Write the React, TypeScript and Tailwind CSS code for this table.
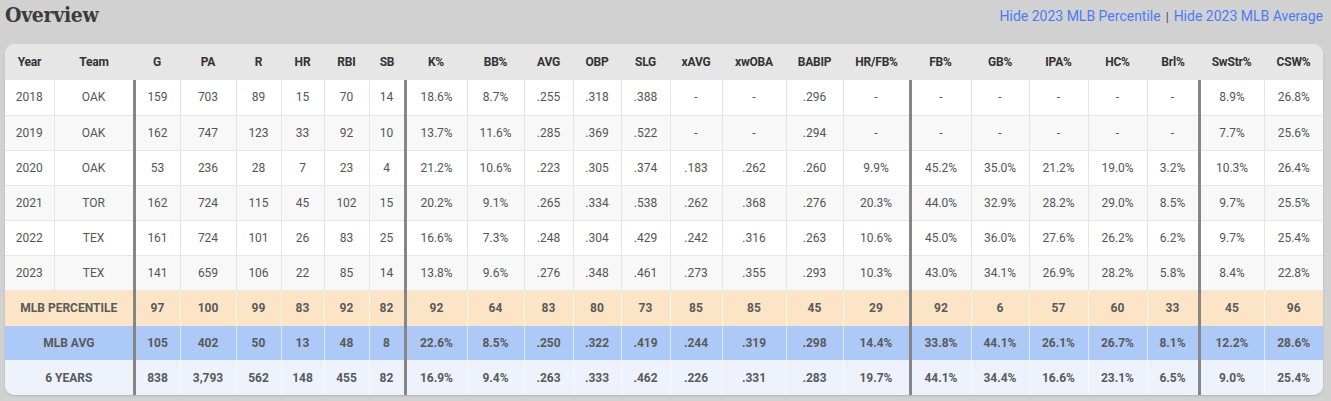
import React from 'react';

type Row = (string | number)[];

const COLUMNS = [
  'Year', 'Team', 'G', 'PA', 'R', 'HR', 'RBI', 'SB', 'K%', 'BB%', 'AVG', 'OBP', 'SLG',
  'xAVG', 'xwOBA', 'BABIP', 'HR/FB%', 'FB%', 'GB%', 'IPA%', 'HC%', 'Brl%', 'SwStr%', 'CSW%',
];

const WIDTHS = [49, 80, 46, 56, 45, 43, 45, 36, 62, 57, 49, 48, 49, 52, 64, 57, 67, 61, 58, 59, 59, 52, 65, 59];

// columns that start a new group get the heavy left rule
const GROUP_START = new Set([2, 8, 17, 22]);

const SEASONS: Row[] = [
  ['2018', 'OAK', 159, 703, 89, 15, 70, 14, '18.6%', '8.7%', '.255', '.318', '.388', '-', '-', '.296', '-', '-', '-', '-', '-', '-', '8.9%', '26.8%'],
  ['2019', 'OAK', 162, 747, 123, 33, 92, 10, '13.7%', '11.6%', '.285', '.369', '.522', '-', '-', '.294', '-', '-', '-', '-', '-', '-', '7.7%', '25.6%'],
  ['2020', 'OAK', 53, 236, 28, 7, 23, 4, '21.2%', '10.6%', '.223', '.305', '.374', '.183', '.262', '.260', '9.9%', '45.2%', '35.0%', '21.2%', '19.0%', '3.2%', '10.3%', '26.4%'],
  ['2021', 'TOR', 162, 724, 115, 45, 102, 15, '20.2%', '9.1%', '.265', '.334', '.538', '.262', '.368', '.276', '20.3%', '44.0%', '32.9%', '28.2%', '29.0%', '8.5%', '9.7%', '25.5%'],
  ['2022', 'TEX', 161, 724, 101, 26, 83, 25, '16.6%', '7.3%', '.248', '.304', '.429', '.242', '.316', '.263', '10.6%', '45.0%', '36.0%', '27.6%', '26.2%', '6.2%', '9.7%', '25.4%'],
  ['2023', 'TEX', 141, 659, 106, 22, 85, 14, '13.8%', '9.6%', '.276', '.348', '.461', '.273', '.355', '.293', '10.3%', '43.0%', '34.1%', '26.9%', '28.2%', '5.8%', '8.4%', '22.8%'],
];

const SUMMARY: { label: string; bg: string; h: string; values: Row }[] = [
  {
    label: 'MLB PERCENTILE',
    bg: 'bg-[#fce5c6]',
    h: 'h-[36px]',
    values: [97, 100, 99, 83, 92, 82, 92, 64, 83, 80, 73, 85, 85, 45, 29, 92, 6, 57, 60, 33, 45, 96],
  },
  {
    label: 'MLB AVG',
    bg: 'bg-[#adc9f8]',
    h: 'h-[34px]',
    values: [105, 402, 50, 13, 48, 8, '22.6%', '8.5%', '.250', '.322', '.419', '.244', '.319', '.298', '14.4%', '33.8%', '44.1%', '26.1%', '26.7%', '8.1%', '12.2%', '28.6%'],
  },
  {
    label: '6 YEARS',
    bg: 'bg-[#edf2fd]',
    h: 'h-[35px]',
    values: [838, '3,793', 562, 148, 455, 82, '16.9%', '9.4%', '.263', '.333', '.462', '.226', '.331', '.283', '19.7%', '44.1%', '34.4%', '16.6%', '23.1%', '6.5%', '9.0%', '25.4%'],
  },
];

const App: React.FC = () => {
  return (
    <div className="min-h-[401px] bg-[#d1d1d1] pl-[5px] pr-[8px] pt-[1px] font-['Roboto',sans-serif]">
      {/* Title bar */}
      <div className="flex items-start justify-between h-[43px]">
        <h2 className="font-['DejaVu_Serif_Condensed','DejaVu_Serif',serif] font-bold text-[21px] leading-[28px] tracking-[-0.3px] text-[#3b3b3b]">Overview</h2>
        <div className="flex items-center gap-[5px] pt-[5px] text-[14px] text-[#4a7cf6]">
          <span className="cursor-pointer">Hide 2023 MLB Percentile</span>
          <span className="text-[12px] text-[#444]">|</span>
          <span className="cursor-pointer">Hide 2023 MLB Average</span>
        </div>
      </div>

      {/* Stats table */}
      <div className="rounded-[10px] overflow-hidden bg-white shadow-[0_1px_2px_rgba(0,0,0,0.15)]">
        <table className="w-full table-fixed border-collapse text-[12px] text-center">
          <colgroup>
            {WIDTHS.map((w, i) => (
              <col key={i} style={{ width: w }} />
            ))}
          </colgroup>
          <thead>
            <tr className="h-[36px] bg-[#e6e6e6]">
              {COLUMNS.map((c) => (
                <th key={c} className="font-bold text-[#333] tracking-[-0.2px] p-0">
                  {c}
                </th>
              ))}
            </tr>
          </thead>
          <tbody>
            {SEASONS.map((row, r) => (
              <tr key={r} className={`h-[35px] ${r % 2 === 1 ? 'bg-[#f8f8f8]' : 'bg-white'}`}>
                {row.map((v, i) => (
                  <td
                    key={i}
                    className={`p-0 text-[#555] border-b border-b-[#e6e6e6] ${
                      GROUP_START.has(i) ? 'border-l-[3px] border-l-[#868686]' : i > 0 ? 'border-l border-l-[#e6e6e6]' : ''
                    }`}
                  >
                    {v}
                  </td>
                ))}
              </tr>
            ))}
            {SUMMARY.map((s) => (
              <tr key={s.label} className={`${s.h} ${s.bg}`}>
                <td colSpan={2} className="p-0 font-bold text-[#5a5a5a]">
                  {s.label}
                </td>
                {s.values.map((v, i) => (
                  <td
                    key={i}
                    className={`p-0 font-bold text-[#5a5a5a] ${
                      GROUP_START.has(i + 2) ? 'border-l-[3px] border-l-[#868686]' : 'border-l border-l-white/60'
                    }`}
                  >
                    {v}
                  </td>
                ))}
              </tr>
            ))}
          </tbody>
        </table>
      </div>
    </div>
  );
};

export default App;
